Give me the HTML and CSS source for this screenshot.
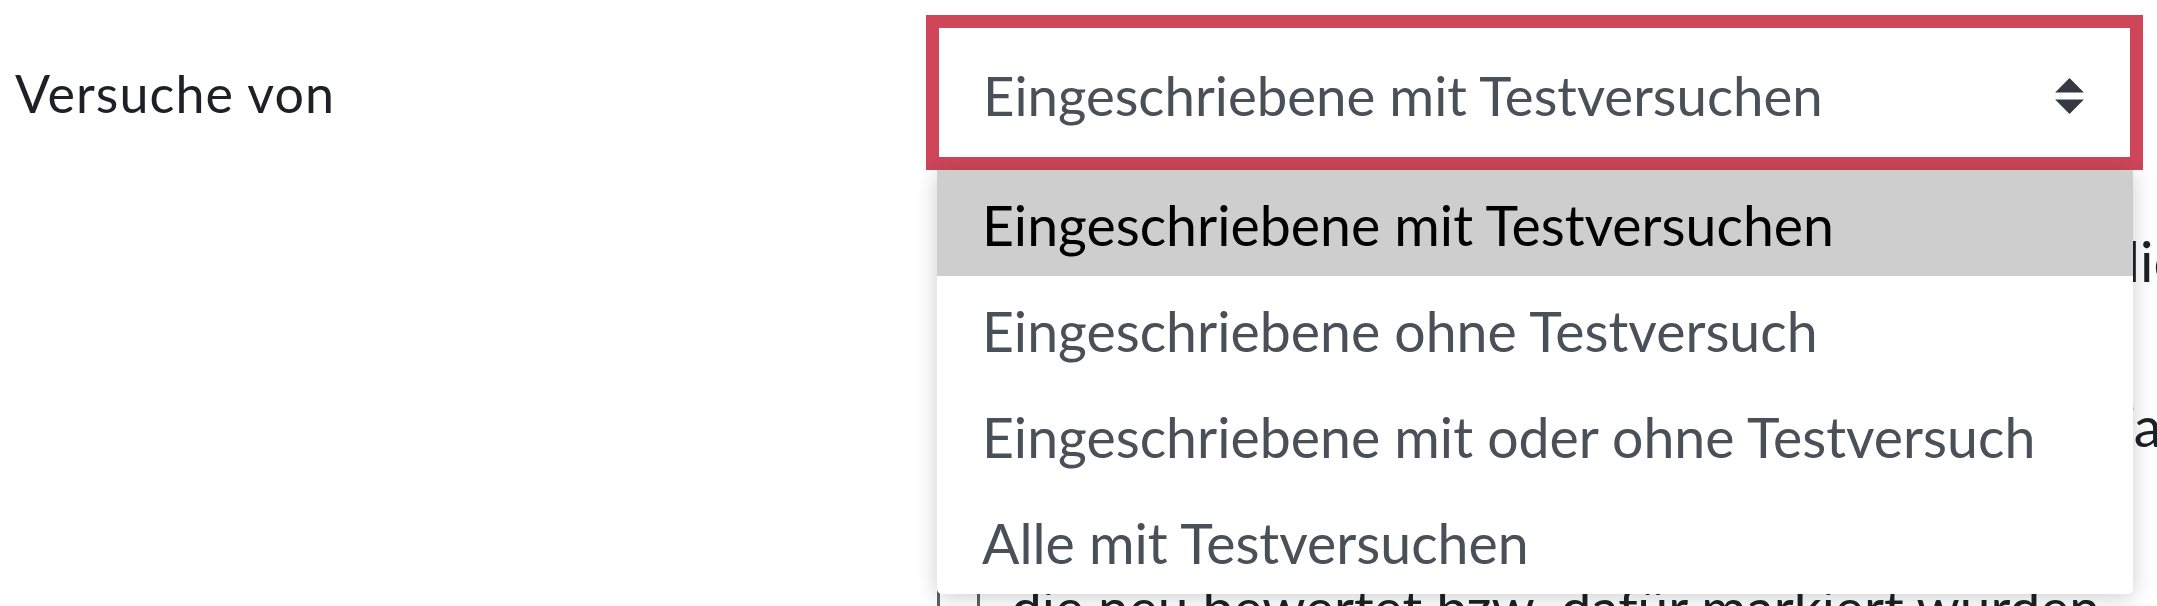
FILE: index.html
```html
<!DOCTYPE html>
<html lang="de">
<head>
<meta charset="utf-8">
<title>Versuche von</title>
<link rel="stylesheet" href="styles.css">
</head>
<body>
<form class="form">
  <div class="form-row">
    <label class="form-label" for="attempts">Versuche von</label>
    <div class="form-controls">
      <div class="select-wrap">
        <div class="select" id="attempts">
          <span class="select-value">Eingeschriebene mit Testversuchen</span>
          <svg class="select-arrows" viewBox="0 0 4 5" aria-hidden="true"><path d="M2 0L0 2h4zm0 5L0 3h4z"/></svg>
        </div>
        <ul class="listbox">
          <li class="option option-active">Eingeschriebene mit Testversuchen</li>
          <li class="option">Eingeschriebene ohne Testversuch</li>
          <li class="option">Eingeschriebene mit oder ohne Testversuch</li>
          <li class="option">Alle mit Testversuchen</li>
        </ul>
      </div>
      <p class="help help-first">Die Versuche werden nach dem gewählten Klick</p>
      <p class="help help-second">Versuche, die sich in folgendem Zustand befanden</p>
      <label class="check"><span class="check-box"></span><span class="check-text">die neu bewertet bzw. dafür markiert wurden</span></label>
    </div>
  </div>
</form>
</body>
</html>
```
FILE: styles.css
```css
html, body {
  margin: 0;
  padding: 0;
  background: #ffffff;
  overflow: hidden;
}

body {
  width: 2157px;
  height: 606px;
  font-family: Lato, "Liberation Sans", sans-serif;
  color: #1d2125;
}

.form-row {
  display: flex;
  align-items: flex-start;
}

.form-label {
  width: 911px;
  padding: 62px 0 0 15px;
  font-size: 52px;
  letter-spacing: 1.1px;
  line-height: 1.2;
  color: #1d2125;
}

.form-controls {
  flex: 1;
  padding-top: 15px;
  min-width: 0;
}

.select-wrap {
  position: relative;
  width: 1217px;
}

.select {
  box-sizing: border-box;
  height: 155px;
  border: 13px solid #cf4559;
  background: #ffffff;
  display: flex;
  align-items: center;
  padding: 6px 46px 0 44px;
  color: #495057;
}

.select-value {
  font-size: 54.6px;
  line-height: 1.2;
}

.select-arrows {
  margin-left: auto;
  width: 29px;
  height: 36px;
  fill: #343a40;
}

.listbox {
  position: absolute;
  top: 155px;
  left: 11px;
  width: 1196px;
  margin: 0;
  padding: 0;
  list-style: none;
  background: #ffffff;
  border-radius: 0 0 5px 5px;
  box-shadow: 0 3px 22px rgba(0, 0, 0, 0.2);
  z-index: 2;
}

.option {
  box-sizing: border-box;
  height: 106px;
  display: flex;
  align-items: center;
  padding: 5px 0 0 45px;
  font-size: 55.4px;
  line-height: 1.2;
  color: #495057;
  white-space: nowrap;
}

.option-active {
  background: #cecece;
  color: #000000;
}

.help {
  margin: 0;
  font-size: 56px;
  line-height: 1.5;
  white-space: nowrap;
  color: #1d2125;
}

.help-first {
  margin-top: 49px;
  padding-left: 106px;
}

.help-second {
  margin-top: 81px;
  padding-left: 129px;
}

.check {
  display: flex;
  align-items: flex-start;
  gap: 31px;
  margin-top: 98px;
  padding-left: 11px;
  font-size: 55px;
  line-height: 1.5;
  white-space: nowrap;
  color: #1d2125;
}

.check-box {
  box-sizing: border-box;
  width: 43px;
  height: 43px;
  margin-top: 19px;
  border: 3px solid #5c6166;
  border-radius: 5px;
  flex: none;
}
```
